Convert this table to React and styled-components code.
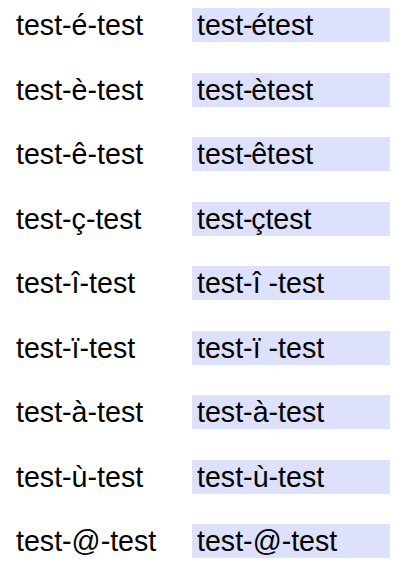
import React from "react";
import styled, { createGlobalStyle } from "styled-components";

const GlobalStyle = createGlobalStyle`
  body {
    margin: 8px;
    background: #ffffff;
    font-family: "Liberation Sans", Arial, sans-serif;
    color: #000000;
  }
`;

const rows = [
  { left: "test-é-test", right: ["test-", "é", "test"], tight: true },
  { left: "test-è-test", right: ["test-", "è", "test"], tight: true },
  { left: "test-ê-test", right: ["test-", "ê", "test"], tight: true },
  { left: "test-ç-test", right: ["test-", "ç", "test"], tight: true },
  { left: "test-î-test", right: ["test-", "î", " -test"] },
  { left: "test-ï-test", right: ["test-", "ï", " -test"] },
  { left: "test-à-test", right: ["test-", "à", "-test"] },
  { left: "test-ù-test", right: ["test-", "ù", "-test"] },
  { left: "test-@-test", right: ["test-", "@", "-test"] },
];

const Table = styled.div`
  display: grid;
  grid-template-columns: 176px 198px;
  grid-auto-rows: 34px;
  row-gap: 30.5px;
  padding-left: 8px;
`;

const Label = styled.div`
  font-size: 28.6px;
  line-height: 34px;
  white-space: pre;
`;

const Cell = styled.div`
  background: #dde1fd;
  font-size: 28.6px;
  line-height: 34px;
  padding-left: 5px;
  white-space: pre;
`;

const Accent = styled.span`
  margin-left: ${(p) => (p.$tight ? "-1.5px" : "0")};
`;

export default function App() {
  return (
    <>
      <GlobalStyle />
      <Table>
        {rows.map((row, i) => (
          <React.Fragment key={i}>
            <Label>{row.left}</Label>
            <Cell>
              {row.right[0]}
              <Accent $tight={row.tight}>{row.right[1]}</Accent>
              {row.right[2]}
            </Cell>
          </React.Fragment>
        ))}
      </Table>
    </>
  );
}
